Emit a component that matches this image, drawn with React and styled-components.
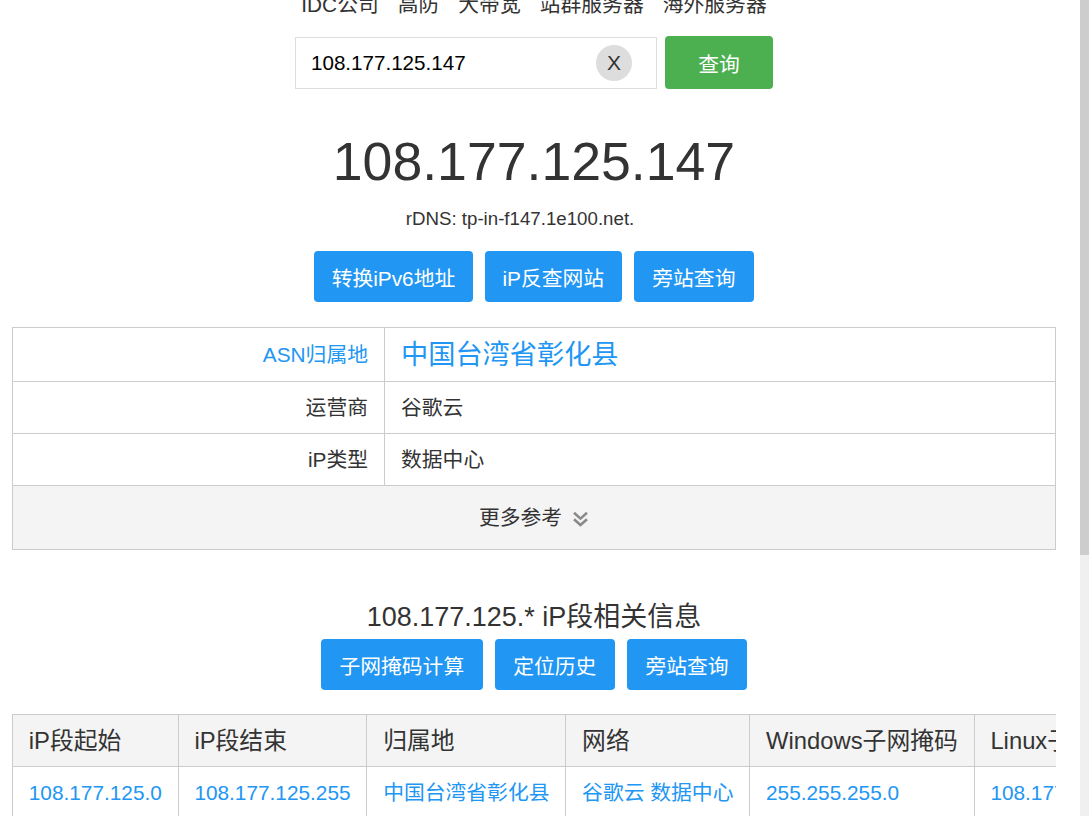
import React from 'react'
import styled, { createGlobalStyle } from 'styled-components'

const blue = '#2196f3'
const line = '#cccccc'
const font = `"Liberation Sans", Arial, "Noto Sans CJK SC", sans-serif`

const navItems = ['IDC公司', '高防', '大带宽', '站群服务器', '海外服务器']

const segRows = [
  {
    start: '108.177.125.0',
    end: '108.177.125.255',
    place: '中国台湾省彰化县',
    net: '谷歌云 数据中心',
    win: '255.255.255.0',
    linux: '108.177.125.0/24',
  },
]

const App = () =>
  <React.Fragment>
    <GlobalStyle />
    <Screen>
      <Main>
        <Nav>
          {navItems.map((item) => <NavLink key={item}>{item}</NavLink>)}
        </Nav>

        <SearchRow>
          <InputBox>
            <SearchInput defaultValue="108.177.125.147" />
            <ClearButton>X</ClearButton>
          </InputBox>
          <QueryButton>查询</QueryButton>
        </SearchRow>

        <BigIp>108.177.125.147</BigIp>
        <Rdns>rDNS: tp-in-f147.1e100.net.</Rdns>

        <ButtonRow $top={19}>
          <BlueButton $pad={17.6}>转换iPv6地址</BlueButton>
          <BlueButton $pad={17.6}>iP反查网站</BlueButton>
          <BlueButton>旁站查询</BlueButton>
        </ButtonRow>

        <InfoTable>
          <colgroup>
            <col style={{ width: 372 }} />
            <col />
          </colgroup>
          <tbody>
            <tr>
              <Label $accent>ASN归属地</Label>
              <Value $big>中国台湾省彰化县</Value>
            </tr>
            <tr>
              <Label>运营商</Label>
              <Value>谷歌云</Value>
            </tr>
            <tr>
              <Label>iP类型</Label>
              <Value>数据中心</Value>
            </tr>
            <tr>
              <MoreCell colSpan={2}>
                更多参考
                <Chevrons viewBox="0 0 17 16">
                  <polyline points="2,1.8 8.5,7.6 15,1.8" />
                  <polyline points="2,8.2 8.5,14 15,8.2" />
                </Chevrons>
              </MoreCell>
            </tr>
          </tbody>
        </InfoTable>

        <SectionTitle>108.177.125.* iP段相关信息</SectionTitle>
        <ButtonRow $top={5}>
          <BlueButton>子网掩码计算</BlueButton>
          <BlueButton>定位历史</BlueButton>
          <BlueButton>旁站查询</BlueButton>
        </ButtonRow>

        <SegWrap>
          <SegTable>
            <thead>
              <tr>
                <Th>iP段起始</Th>
                <Th>iP段结束</Th>
                <Th>归属地</Th>
                <Th>网络</Th>
                <Th>Windows子网掩码</Th>
                <Th>Linux子网掩码</Th>
              </tr>
            </thead>
            <tbody>
              {segRows.map((r) =>
                <tr key={r.start}>
                  <Td>{r.start}</Td>
                  <Td>{r.end}</Td>
                  <Td>{r.place}</Td>
                  <Td>{r.net}</Td>
                  <Td>{r.win}</Td>
                  <Td>{r.linux}</Td>
                </tr>
              )}
            </tbody>
          </SegTable>
        </SegWrap>
      </Main>
      <ScrollTrack>
        <ScrollThumb />
      </ScrollTrack>
    </Screen>
  </React.Fragment>

export default App

// STYLES
const GlobalStyle = createGlobalStyle`
  html, body {
    margin: 0;
    padding: 0;
    background: #fff;
    overflow: hidden;
  }
  body {
    font-family: ${font};
    color: #333;
  }
  * {
    box-sizing: border-box;
  }
`

const Screen = styled.div`
  display: flex;
  width: 1089px;
  height: 816px;
  overflow: hidden;
`

const Main = styled.div`
  flex: 1;
  min-width: 0;
  padding: 0 24px 0 12px;
  overflow: hidden;
`

const ScrollTrack = styled.div`
  width: 9px;
  height: 100%;
  background: #f0f0f0;
`

const ScrollThumb = styled.div`
  height: 555px;
  background: #cdcdcd;
`

const Nav = styled.nav`
  display: flex;
  justify-content: center;
  margin-top: -10px;
  line-height: 30px;
  font-size: 20.8px;
`

const NavLink = styled.a`
  padding: 0 9.5px;
  color: #333;
  text-decoration: none;
`

const SearchRow = styled.div`
  display: flex;
  justify-content: center;
  align-items: center;
  gap: 8px;
  margin-top: 16px;
`

const InputBox = styled.div`
  position: relative;
  width: 362px;
  height: 52px;
`

const SearchInput = styled.input`
  width: 100%;
  height: 100%;
  border: 1px solid #ddd;
  padding: 0 60px 0 15px;
  font-family: ${font};
  font-size: 20.6px;
  color: #000;
  outline: none;
`

const ClearButton = styled.span`
  position: absolute;
  right: 25px;
  top: 8px;
  width: 36px;
  height: 36px;
  border-radius: 50%;
  background: #ddd;
  display: flex;
  align-items: center;
  justify-content: center;
  font-size: 21px;
  color: #333;
`

const QueryButton = styled.button`
  width: 108px;
  height: 53px;
  border: 0;
  border-radius: 4px;
  background: #4caf50;
  color: #fff;
  font-family: ${font};
  font-size: 20.8px;
`

const BigIp = styled.h1`
  margin: 40px 0 0;
  text-align: center;
  font-size: 53.6px;
  line-height: 65px;
  font-weight: normal;
  color: #333;
`

const Rdns = styled.div`
  margin-top: 12px;
  padding-right: 28px;
  text-align: center;
  font-size: 18.7px;
  line-height: 26px;
`

const ButtonRow = styled.div`
  display: flex;
  justify-content: center;
  gap: 12px;
  margin-top: ${(p) => p.$top}px;
`

const BlueButton = styled.button`
  height: 51px;
  padding: 0 ${(p) => p.$pad || 18.5}px;
  border: 0;
  border-radius: 4px;
  background: ${blue};
  color: #fff;
  font-family: ${font};
  font-size: 20.8px;
`

const InfoTable = styled.table`
  width: 100%;
  margin-top: 25px;
  border-collapse: collapse;
  table-layout: fixed;
  font-size: 20.8px;
  td {
    border: 1px solid ${line};
  }
`

const Label = styled.td`
  padding: 12px 16px;
  line-height: ${(p) => (p.$accent ? 29 : 27)}px;
  text-align: right;
  color: ${(p) => (p.$accent ? blue : '#333')};
`

const Value = styled.td`
  padding: 12px 16px;
  line-height: ${(p) => (p.$big ? 29 : 27)}px;
  font-size: ${(p) => (p.$big ? '27.2px' : '20.8px')};
  color: ${(p) => (p.$big ? blue : '#333')};
`

const MoreCell = styled.td`
  padding: 18px 16px;
  line-height: 27px;
  text-align: center;
  background: #f4f4f4;
  color: #333;
`

const Chevrons = styled.svg`
  width: 17px;
  height: 16px;
  margin-left: 10px;
  vertical-align: -2px;
  fill: none;
  stroke: #8a8a8a;
  stroke-width: 2.6;
`

const SectionTitle = styled.h2`
  margin: 50px 0 0;
  text-align: center;
  font-size: 27px;
  line-height: 34px;
  font-weight: normal;
  color: #333;
`

const SegWrap = styled.div`
  width: 100%;
  margin-top: 24px;
  overflow: hidden;
`

const SegTable = styled.table`
  border-collapse: collapse;
  white-space: nowrap;
`

const Th = styled.th`
  padding: 12px 15.8px;
  border: 1px solid ${line};
  background: #f4f4f4;
  text-align: left;
  font-size: 23.8px;
  line-height: 27px;
  font-weight: normal;
  color: #333;
`

const Td = styled.td`
  padding: 12px 15.8px;
  border: 1px solid ${line};
  font-size: 20.8px;
  line-height: 27px;
  color: ${blue};
`
